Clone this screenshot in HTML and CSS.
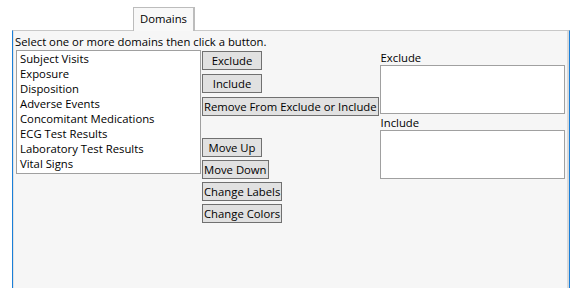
FILE: index.html
```html
<!DOCTYPE html>
<html lang="en">
<head>
  <meta charset="UTF-8">
  <title>Domains</title>
  <link rel="stylesheet" href="styles.css">
</head>
<body>

  <div class="tabs">
    <div class="tab">Domains</div>
  </div>

  <div class="frame">
    <div class="hint">Select one or more domains then click a button.</div>

    <div class="main">
      <div class="list">
        <div class="item">Subject Visits</div>
        <div class="item">Exposure</div>
        <div class="item">Disposition</div>
        <div class="item">Adverse Events</div>
        <div class="item">Concomitant Medications</div>
        <div class="item">ECG Test Results</div>
        <div class="item">Laboratory Test Results</div>
        <div class="item">Vital Signs</div>
      </div>

      <div class="actions">
        <div class="group">
          <button class="btn wide">Exclude</button>
          <button class="btn wide">Include</button>
          <button class="btn">Remove From Exclude or Include</button>
        </div>
        <div class="group tight">
          <button class="btn wide">Move Up</button>
          <button class="btn">Move Down</button>
          <button class="btn">Change Labels</button>
          <button class="btn">Change Colors</button>
        </div>
      </div>

      <div class="targets">
        <div class="target-label">Exclude</div>
        <div class="target-box"></div>
        <div class="target-label">Include</div>
        <div class="target-box"></div>
      </div>
    </div>
  </div>

</body>
</html>
```

FILE: styles.css
```css
:root {
  --accent: #1a7fd9;
  --panel: #f6f6f6;
  --edge: #a0a0a0;
}

body {
  margin: 0;
  background: white;
  font-family: "Open Sans", "Noto Sans", sans-serif;
  font-size: 11.3px;
  color: #000;
}

.tabs {
  display: flex;
  padding: 7px 0 0 133px;
}

.tab {
  width: 59px;
  height: 23px;
  line-height: 22px;
  text-align: center;
  background: #f8f8f8;
  border: 1px solid #bcbcbc;
  border-right-width: 2px;
  border-bottom: none;
  position: relative;
  z-index: 1;
  margin-bottom: -1px;
}

.frame {
  margin-left: 12px;
  width: 554px;
  height: 257px;
  background: var(--panel);
  border-left: 1px solid var(--accent);
  border-right: 1px solid var(--accent);
  border-top: 1px solid #c8c8c8;
  box-shadow: inset 1px 0 0 #e2e2e2, inset -2px 0 0 #dadada;
  padding-left: 2px;
}

.hint {
  line-height: 15px;
  padding-top: 3px;
}

.main {
  display: flex;
  gap: 1px;
  margin-top: 1px;
  padding-left: 1px;
}

.list {
  width: 179px;
  height: 122px;
  background: white;
  border: 1px solid var(--edge);
  padding: 0 1px 0 3px;
}

.item {
  line-height: 15px;
}

.actions {
  display: flex;
  flex-direction: column;
  gap: 22px;
  padding-top: 1px;
}

.group {
  display: flex;
  flex-direction: column;
  align-items: flex-start;
  gap: 4px;
}

.group.tight {
  gap: 3px;
}

.btn {
  height: 19px;
  padding: 0 1px;
  font-family: inherit;
  font-size: 11.3px;
  color: #000;
  background: #e1e1e1;
  border: 1px solid #707070;
  border-radius: 0;
  line-height: 16px;
}

.wide {
  min-width: 60px;
}

.targets {
  width: 185px;
  padding-top: 1px;
}

.target-label {
  line-height: 14px;
  padding-left: 1px;
}

.target-box {
  height: 47px;
  background: white;
  border: 1px solid var(--edge);
  margin-bottom: 2px;
}
```
